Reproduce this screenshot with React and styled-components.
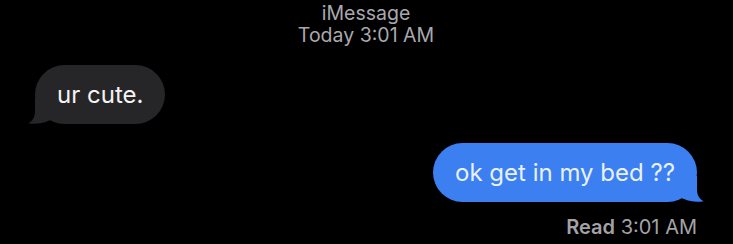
import React from "react";
import styled, { createGlobalStyle } from "styled-components";

const GlobalStyle = createGlobalStyle`
  html, body {
    margin: 0;
    padding: 0;
    background: #000;
  }
  body {
    font-family: Inter, "Liberation Sans", sans-serif;
  }
`;

// bubble tail, drawn for the left side; the right one is mirrored
const TAIL = "M8 2 L8 16 C8 21 5.5 25 1.5 27.2 C8 28.4 15 27.6 21 25 L30 22 L30 2 Z";

export default function App() {
  return (
    <>
      <GlobalStyle />
      <Screen>
        <Header>
          <Service>iMessage</Service>
          <Stamp>Today 3:01 AM</Stamp>
        </Header>
        <Row side="left">
          <Bubble side="left">
            ur cute.
            <Tail side="left" viewBox="0 0 28 28">
              <path d={TAIL} />
            </Tail>
          </Bubble>
        </Row>
        <Row side="right">
          <Bubble side="right">
            ok get in my bed ??
            <Tail side="right" viewBox="0 0 28 28">
              <path d={TAIL} />
            </Tail>
          </Bubble>
        </Row>
        <Receipt>
          <b>Read</b> 3:01 AM
        </Receipt>
      </Screen>
    </>
  );
}

const Screen = styled.div`
  width: 733px;
  height: 244px;
  background: #000;
  display: flex;
  flex-direction: column;
  box-sizing: border-box;
  padding: 2px 36px 0 35px;
  overflow: hidden;
`;

const Header = styled.div`
  display: flex;
  flex-direction: column;
  align-items: center;
  color: #a9a9ad;
  font-size: 19.5px;
  line-height: 22px;
`;

const Service = styled.div``;
const Stamp = styled.div``;

const Row = styled.div`
  display: flex;
  justify-content: ${(p) => (p.side === "right" ? "flex-end" : "flex-start")};
  margin-top: 19px;
`;

const Bubble = styled.div`
  position: relative;
  height: 59px;
  display: flex;
  align-items: center;
  padding: 0 22px;
  border-radius: 30px;
  font-size: 24px;
  background: ${(p) => (p.side === "right" ? "#3c7ff0" : "#262628")};
  color: ${(p) => (p.side === "right" ? "#e8f1ff" : "#f4f4f4")};
  fill: ${(p) => (p.side === "right" ? "#3c7ff0" : "#262628")};
`;

const Tail = styled.svg`
  position: absolute;
  bottom: 0;
  width: 28px;
  height: 28px;
  ${(p) =>
    p.side === "right"
      ? "right: -8px; transform: scaleX(-1);"
      : "left: -8px;"}
`;

const Receipt = styled.div`
  align-self: flex-end;
  margin-top: 13px;
  color: #a3a3a7;
  font-size: 20px;
  b {
    font-weight: 600;
  }
`;
